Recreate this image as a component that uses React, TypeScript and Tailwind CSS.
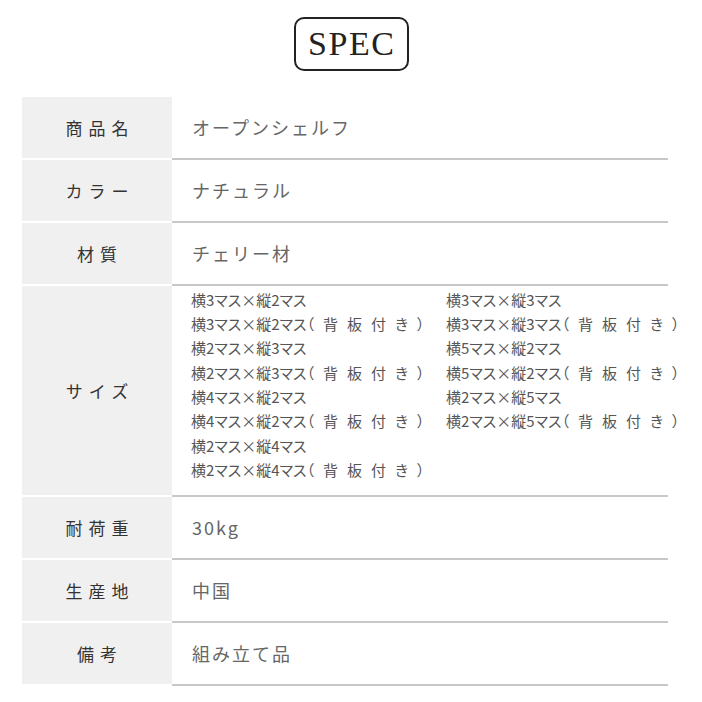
import React from "react";

const rows: { label: string; value: string }[] = [
  { label: "商品名", value: "オープンシェルフ" },
  { label: "カラー", value: "ナチュラル" },
  { label: "材質", value: "チェリー材" },
];

const tailRows: { label: string; value: string }[] = [
  { label: "耐荷重", value: "30kg" },
  { label: "生産地", value: "中国" },
  { label: "備考", value: "組み立て品" },
];

// [main, hasBackboard]
const sizes: [string, boolean][][] = [
  [["横3マス×縦2マス", false], ["横3マス×縦3マス", false]],
  [["横3マス×縦2マス", true], ["横3マス×縦3マス", true]],
  [["横2マス×縦3マス", false], ["横5マス×縦2マス", false]],
  [["横2マス×縦3マス", true], ["横5マス×縦2マス", true]],
  [["横4マス×縦2マス", false], ["横2マス×縦5マス", false]],
  [["横4マス×縦2マス", true], ["横2マス×縦5マス", true]],
  [["横2マス×縦4マス", false]],
  [["横2マス×縦4マス", true]],
];

function Label({ text }: { text: string }) {
  return (
    <div className="w-[150px] shrink-0 mb-[2px] bg-[#f0f0f0] flex items-center justify-center">
      <span className="text-[17px] text-[#333] tracking-[6px] pl-[6px]">{text}</span>
    </div>
  );
}

function Row({ label, value }: { label: string; value: string }) {
  return (
    <div className="flex h-[63px]">
      <Label text={label} />
      <div className="flex-1 min-w-0 flex items-center pl-[20px] border-b-2 border-[#c8c8c8]">
        <span className="text-[18px] text-[#666] tracking-[2px]">{value}</span>
      </div>
    </div>
  );
}

function SizeText({ main, back }: { main: string; back: boolean }) {
  return (
    <span>
      {main}
      {back && <span className="tracking-[9px]">（背板付き）</span>}
    </span>
  );
}

export default function App() {
  return (
    <div
      className="w-[702px] h-[702px] bg-white overflow-hidden"
      style={{ fontFamily: '"Noto Sans CJK JP", "Noto Sans", sans-serif' }}
    >
      <div className="flex justify-center pt-[17px]">
        <div className="w-[115px] h-[54px] border-2 border-[#222] rounded-[10px] flex items-center justify-center">
          <span
            className="text-[34px] leading-none text-[#222] tracking-[1.5px] pl-[1.5px]"
            style={{ fontFamily: '"Liberation Serif", serif' }}
          >
            SPEC
          </span>
        </div>
      </div>

      <div className="ml-[22px] w-[646px] mt-[26px]">
        {rows.map((r) => (
          <Row key={r.label} {...r} />
        ))}

        <div className="flex">
          <Label text="サイズ" />
          <div className="flex-1 min-w-0 pl-[19px] pt-[2px] pb-[13px] border-b-2 border-[#c8c8c8]">
            {sizes.map((line, i) => (
              <div
                key={i}
                className="grid grid-cols-[255px_auto] h-[24.3px] items-center text-[15px] text-[#555] whitespace-nowrap [font-feature-settings:'palt']"
              >
                {line.map(([main, back], j) => (
                  <SizeText key={j} main={main} back={back} />
                ))}
              </div>
            ))}
          </div>
        </div>

        {tailRows.map((r) => (
          <Row key={r.label} {...r} />
        ))}
      </div>
    </div>
  );
}
